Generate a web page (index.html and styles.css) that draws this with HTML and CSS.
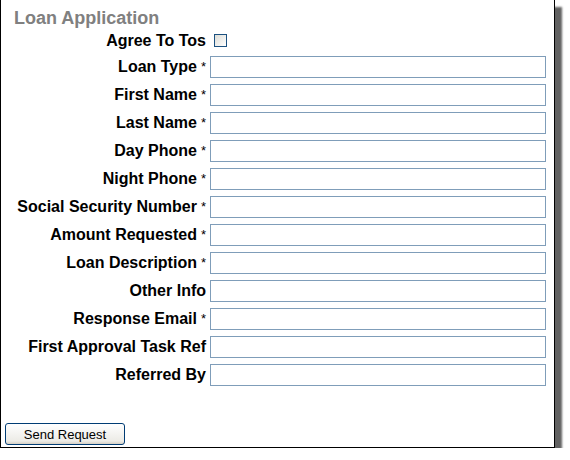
FILE: index.html
```html
<!DOCTYPE html>
<html lang="en">
<head>
  <meta charset="UTF-8">
  <title>Loan Application</title>
  <link rel="stylesheet" href="styles.css">
</head>
<body>
  <div class="frame">
    <h2 class="title">Loan Application</h2>
    <form class="loan-form">
      <label class="lbl agree-lbl" for="tos">Agree To Tos</label>
      <div class="cell"><span class="check" id="tos"></span></div>

      <label class="lbl">Loan Type <span class="req">*</span></label>
      <input class="field" type="text">
      <label class="lbl">First Name <span class="req">*</span></label>
      <input class="field" type="text">
      <label class="lbl">Last Name <span class="req">*</span></label>
      <input class="field" type="text">
      <label class="lbl">Day Phone <span class="req">*</span></label>
      <input class="field" type="text">
      <label class="lbl">Night Phone <span class="req">*</span></label>
      <input class="field" type="text">
      <label class="lbl">Social Security Number <span class="req">*</span></label>
      <input class="field" type="text">
      <label class="lbl">Amount Requested <span class="req">*</span></label>
      <input class="field" type="text">
      <label class="lbl">Loan Description <span class="req">*</span></label>
      <input class="field" type="text">
      <label class="lbl">Other Info</label>
      <input class="field" type="text">
      <label class="lbl">Response Email <span class="req">*</span></label>
      <input class="field" type="text">
      <label class="lbl">First Approval Task Ref</label>
      <input class="field" type="text">
      <label class="lbl">Referred By</label>
      <input class="field" type="text">
    </form>
    <div class="actions">
      <button type="button" class="send">Send Request</button>
    </div>
  </div>
</body>
</html>
```

FILE: styles.css
```css
body {
  margin: 0;
  background: #fff;
  font-family: "Liberation Sans", Arial, sans-serif;
  color: #000;
}
.frame {
  width: 553px;
  height: 447px;
  border: 1px solid #000;
  border-top: none;
  background: #fff;
  box-shadow: 7px 7px 2px rgba(0, 0, 0, 0.62);
  display: flex;
  flex-direction: column;
}
.title {
  margin: 0;
  padding: 8px 0 3px 13px;
  font-size: 18px;
  line-height: 20px;
  font-weight: bold;
  color: #808080;
}
.loan-form {
  display: grid;
  grid-template-columns: 205px 335px;
  grid-auto-rows: 22px;
  grid-template-rows: 19px;
  column-gap: 4px;
  row-gap: 6px;
}
.lbl {
  display: flex;
  align-items: center;
  justify-content: flex-end;
  font-size: 16px;
  font-weight: bold;
  white-space: nowrap;
}
.req {
  font-size: 13px;
  font-weight: normal;
  margin-left: 4px;
  position: relative;
  top: -1px;
}
.cell {
  display: flex;
  align-items: center;
}
.check {
  display: block;
  width: 11px;
  height: 11px;
  margin-left: 4px;
  border: 1px solid #1c5180;
  background: linear-gradient(135deg, #dcdcd6, #ffffff);
}
.field {
  box-sizing: border-box;
  width: 336px;
  height: 22px;
  margin: 0;
  border: 1px solid #7f9db9;
  background: #fff;
}
.actions {
  margin-top: auto;
  padding: 0 0 2px 4px;
}
.send {
  width: 120px;
  height: 22px;
  padding: 0;
  font-family: "Liberation Sans", Arial, sans-serif;
  font-size: 13px;
  color: #000;
  border: 1px solid #003c74;
  border-radius: 3px;
  background: linear-gradient(#ffffff, #ecebe6 85%, #d6d0c5);
}
```
